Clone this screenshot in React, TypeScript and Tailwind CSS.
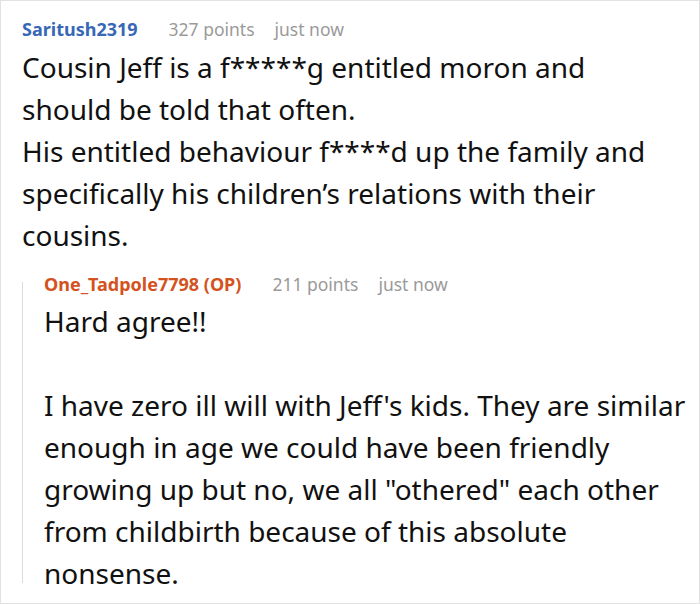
type CommentHeaderProps = {
  author: string;
  points: number;
  time: string;
  authorClass: string;
};

function CommentHeader({ author, points, time, authorClass }: CommentHeaderProps) {
  return (
    <div className="flex items-baseline leading-[24px] whitespace-nowrap">
      <span className={`text-[18px] font-bold ${authorClass}`}>{author}</span>
      <span className="ml-[31px] text-[17.5px] text-[#9a9a9a]">{points} points</span>
      <span className="ml-[20px] text-[17.5px] text-[#9a9a9a]">{time}</span>
    </div>
  );
}

export default function App() {
  return (
    <div className="h-[604px] w-[700px] border border-[#e2e2e2] bg-white font-['Noto_Sans',sans-serif] text-[#111]">
      <div className="pl-[21px] pr-[8px] pt-[16px] pb-[6px]">
        <CommentHeader
          author="Saritush2319"
          points={327}
          time="just now"
          authorClass="text-[#3767b6]"
        />
        <p className="mt-[5px] text-[28px] leading-[42px] whitespace-nowrap">
          Cousin Jeff is a f*****g entitled moron and
          <br />
          should be told that often.
          <br />
          His entitled behaviour f****d up the family and
          <br />
          specifically his children’s relations with their
          <br />
          cousins.
        </p>

        <div className="mt-[16px] flex">
          <div className="mt-[10px] mb-[11px] w-px shrink-0 bg-[#dcdcdc]" />
          <div className="pl-[21px]">
            <CommentHeader
              author="One_Tadpole7798 (OP)"
              points={211}
              time="just now"
              authorClass="text-[#d4521e]"
            />
            <div className="mt-[4px] text-[28px] leading-[42px] whitespace-nowrap">
              <p>Hard agree!!</p>
              <p>&nbsp;</p>
              <p>
                I have zero ill will with Jeff's kids. They are similar
                <br />
                enough in age we could have been friendly
                <br />
                growing up but no, we all "othered" each other
                <br />
                from childbirth because of this absolute
                <br />
                nonsense.
              </p>
            </div>
          </div>
        </div>
      </div>
    </div>
  );
}
